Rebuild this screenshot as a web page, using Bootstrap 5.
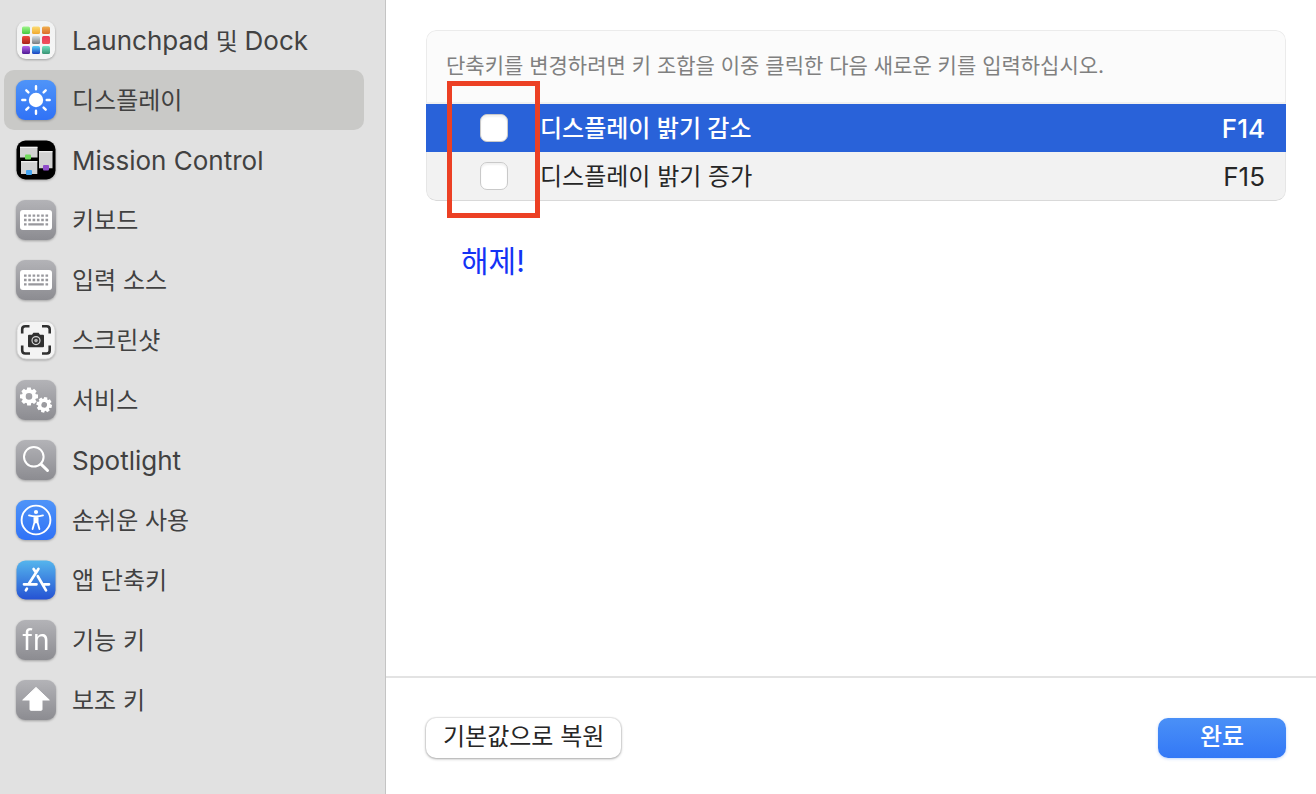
<!DOCTYPE html>
<html lang="ko">
<head>
<meta charset="utf-8">
<meta name="viewport" content="width=device-width, initial-scale=1">
<title>키보드 단축키</title>
<link href="https://cdn.jsdelivr.net/npm/bootstrap@5.3.0/dist/css/bootstrap.min.css" rel="stylesheet">
<style>
body { font-family: Inter, "Noto Sans CJK KR", sans-serif; font-size: 24px; line-height: 32px; color: #262626; background: #fff; }
.side { flex: 0 0 386px; padding: 10px 21px 10px 4px; background: #e1e1e1; border-right: 1px solid #c4c4c4; }
.side .nav-link { height: 60px; padding: 0 12px; gap: 16px; border-radius: 10px; color: #414141; }
.side .nav-link.active { background: #c9c9c7; color: #414141; }
.side .nav-link > span { padding-top: 2px; }
.latin { font-size: 26px; }
.side svg { width: 40px; height: 40px; flex: none; overflow: visible; filter: drop-shadow(0 1px 1px rgba(0,0,0,.28)); }
.content-area { padding: 30px 30px 30px 40px; }
.panel { border-radius: 10px; overflow: hidden; }
.hint { height: 74px; padding: 0 19px 2px; font-size: 21px; color: #808080; background: #fbfbfb; border: 1px solid #ebebeb; border-bottom: 2px solid #f0f0f0; border-radius: 10px 10px 0 0; }
.keys { width: 100%; border-collapse: separate; border-spacing: 0; }
.keys td { height: 48px; padding: 2px 0 0; background: #f2f2f2; }
.keys .chosen td { background: #2962d9; color: #fff; font-weight: 500; }
.keys .tick-cell { width: 114px; padding-top: 0; padding-left: 54px; }
.keys .key-cell { padding-right: 21px; text-align: right; }
.keys tr:last-child td { height: 49px; border-bottom: 1px solid #d9d9d9; }
.keys tr:last-child td:first-child { border-left: 1px solid #e6e6e6; border-bottom-left-radius: 10px; padding-left: 53px; }
.keys tr:last-child td:last-child { border-right: 1px solid #e6e6e6; border-bottom-right-radius: 10px; padding-right: 20px; }
.keys .form-check-input { display: block; float: none; width: 28px; height: 28px; margin: 0; border: 1px solid #c9c9c9; border-radius: 7px; box-shadow: inset 0 2px 2px rgba(0,0,0,.06); background-color: #fff; }
.marker { left: 21px; top: 51px; width: 93px; height: 137px; border: 5px solid #ec4024; pointer-events: none; }
.note { margin: 44px 0 0 35px; font-size: 30px; color: #1433f5; }
.foot { height: 118px; padding: 4px 30px 0 40px; border-top: 2px solid #e3e3e3; }
.foot .btn { height: 40px; padding: 0 17px 3px; font-size: 24px; line-height: 32px; border: 0; border-radius: 10px; }
.btn-plain, .btn-plain:hover { color: #262626; background: #fff; box-shadow: 0 0 1px 1px rgba(0,0,0,.08), 0 1px 3px rgba(0,0,0,.3); }
.btn-done, .btn-done:hover { width: 128px; color: #fff; font-weight: 500; background: linear-gradient(#4a90f7, #3378f6); box-shadow: 0 1px 3px rgba(51,120,246,.3); }
</style>
</head>
<body>
<svg width="0" height="0" class="position-absolute" aria-hidden="true">
  <defs>
    <linearGradient id="gray" x2="0" y2="1"><stop stop-color="#b3b3b7"/><stop offset="1" stop-color="#8c8c91"/></linearGradient>
    <linearGradient id="blue" x2="0" y2="1"><stop stop-color="#4f94f8"/><stop offset="1" stop-color="#3072f6"/></linearGradient>
    <linearGradient id="store" x2="0" y2="1"><stop stop-color="#55b5ed"/><stop offset="1" stop-color="#2552d3"/></linearGradient>
    <linearGradient id="paper" x2="0" y2="1"><stop stop-color="#f1f2f2"/><stop offset="1" stop-color="#f6f6f6"/></linearGradient>
    <linearGradient id="c1" x2="0" y2="1"><stop stop-color="#a0f58c"/><stop offset="1" stop-color="#43c83c"/></linearGradient>
    <linearGradient id="c2" x2="0" y2="1"><stop stop-color="#fbdc74"/><stop offset="1" stop-color="#f0a92e"/></linearGradient>
    <linearGradient id="c3" x2="0" y2="1"><stop stop-color="#f0b04e"/><stop offset="1" stop-color="#db6a2b"/></linearGradient>
    <linearGradient id="c4" x2="0" y2="1"><stop stop-color="#ef4b3e"/><stop offset="1" stop-color="#a82119"/></linearGradient>
    <linearGradient id="c5" x2="0" y2="1"><stop stop-color="#d5dfe4"/><stop offset="1" stop-color="#777c7f"/></linearGradient>
    <linearGradient id="c6" x2="0" y2="1"><stop stop-color="#e93a58"/><stop offset="1" stop-color="#f0525c"/></linearGradient>
    <linearGradient id="c7" x2="0" y2="1"><stop stop-color="#b763ec"/><stop offset="1" stop-color="#4e1a94"/></linearGradient>
    <linearGradient id="c8" x2="0" y2="1"><stop stop-color="#55d3fa"/><stop offset="1" stop-color="#1e41c0"/></linearGradient>
    <linearGradient id="c9" x2="0" y2="1"><stop stop-color="#72e3c2"/><stop offset="1" stop-color="#3a9474"/></linearGradient>
    <g id="keyboard">
      <rect width="40" height="40" rx="9" fill="url(#gray)"/>
      <rect x="4" y="10" width="32" height="20" rx="3" fill="#fff"/>
      <g stroke="#98989d" stroke-width="2.4"><path d="M8 15.6h25M8 20h25" stroke-dasharray="2.6 1.7"/><path d="M8 24.4h2.6M12.3 24.4h15.500M29.500 24.4h2.6"/></g>
    </g>
    <path id="tooth" d="M-1.8 -9h3.6l.7 4h-5z"/>
    <g id="cog">
      <circle r="5.2" fill="none" stroke="#fff" stroke-width="3.8"/>
      <g fill="#fff"><use href="#tooth"/><use href="#tooth" transform="rotate(45)"/><use href="#tooth" transform="rotate(90)"/><use href="#tooth" transform="rotate(135)"/><use href="#tooth" transform="rotate(180)"/><use href="#tooth" transform="rotate(225)"/><use href="#tooth" transform="rotate(270)"/><use href="#tooth" transform="rotate(315)"/></g>
    </g>
  </defs>
</svg>
<div class="d-flex min-vh-100">
  <nav class="side nav flex-column flex-nowrap" aria-label="단축키 분류">
    <a class="nav-link d-flex align-items-center" href="#">
      <svg viewBox="0 0 40 40"><rect x="1" y="1" width="38" height="38" rx="9" fill="url(#paper)"/>
        <g><rect x="6" y="6.500" width="8" height="7.500" rx="1.5" fill="url(#c1)"/><rect x="16" y="6.500" width="8" height="7.500" rx="1.5" fill="url(#c2)"/><rect x="26" y="6.500" width="8" height="7.500" rx="1.5" fill="url(#c3)"/><rect x="6" y="16" width="8" height="8" rx="1.5" fill="url(#c4)"/><rect x="16" y="16" width="8" height="8" rx="1.5" fill="url(#c5)"/><rect x="26" y="16" width="8" height="8" rx="1.5" fill="url(#c6)"/><rect x="6" y="26" width="8" height="8" rx="1.5" fill="url(#c7)"/><rect x="16" y="26" width="8" height="8" rx="1.5" fill="url(#c8)"/><rect x="26" y="26" width="8" height="8" rx="1.5" fill="url(#c9)"/></g></svg>
      <span><span class="latin">Launchpad</span> 및 <span class="latin">Dock</span></span></a>
    <a class="nav-link active d-flex align-items-center" href="#" aria-current="page">
      <svg viewBox="0 0 40 40"><rect width="40" height="40" rx="9" fill="url(#blue)"/><circle cx="20" cy="20" r="7.2" fill="#fff"/>
        <path d="M20 6.300v3M20 30.700v3M6.300 20h3M30.700 20h3M10.300 10.300l2.1 2.1M27.600 27.600l2.1 2.1M10.300 29.700l2.1-2.1M27.600 12.400l2.1-2.1" stroke="#fff" stroke-width="2.4" stroke-linecap="round"/></svg>
      <span>디스플레이</span></a>
    <a class="nav-link d-flex align-items-center" href="#">
      <svg viewBox="0 0 40 40"><rect x=".5" y=".5" width="39" height="39" rx="9" fill="#000"/>
        <g fill="#d2d2d2"><path d="M4 7h17.500v10.500H4zM5 21.300h16.300v12.700H5zM23 11.300h13.500v17H23z"/></g>
        <path d="M4 7.200h17.500M5 21.700h16.300M23 11.700h13.500" stroke="#fff"/>
        <rect x="9" y="14.5" width="6" height="5" rx="1" fill="#70d85b"/><rect x="10" y="30" width="6" height="5" rx="1" fill="#43a4f2"/><rect x="27" y="25" width="6" height="5.5" rx="1" fill="#8f4cc9"/></svg>
      <span class="latin">Mission Control</span></a>
    <a class="nav-link d-flex align-items-center" href="#"><svg viewBox="0 0 40 40"><use href="#keyboard"/></svg><span>키보드</span></a>
    <a class="nav-link d-flex align-items-center" href="#"><svg viewBox="0 0 40 40"><use href="#keyboard"/></svg><span>입력 소스</span></a>
    <a class="nav-link d-flex align-items-center" href="#">
      <svg viewBox="0 0 40 40"><rect x="1" y="1.5" width="38" height="37.5" rx="9" fill="#f4f4f4" stroke="#d5d5d5" stroke-width=".8"/>
        <path d="M6.200 13.500V9.200q0-3 3-3h4.300M26 6.200h4.700q3 0 3 3v4.300M33.700 25.500v5q0 3-3 3H26M14 33.500H9.200q-3 0-3-3v-5" fill="none" stroke="#303030" stroke-width="2.6"/>
        <path d="M13 14.8h3l1.4-2h5.2l1.4 2h3q1 0 1 1v10.4q0 1-1 1H13q-1 0-1-1V15.8q0-1 1-1z" fill="#303030"/><circle cx="20" cy="20.6" r="4" fill="none" stroke="#d6d6d6" stroke-width="1.2"/><circle cx="20" cy="20.6" r="1.8" fill="#b4b4b4"/></svg>
      <span>스크린샷</span></a>
    <a class="nav-link d-flex align-items-center" href="#">
      <svg viewBox="0 0 40 40"><rect width="40" height="40" rx="9" fill="url(#gray)"/><use href="#cog" transform="translate(13 16.4)"/><use href="#cog" transform="translate(28.2 24.8) rotate(12) scale(.86)"/></svg>
      <span>서비스</span></a>
    <a class="nav-link d-flex align-items-center" href="#">
      <svg viewBox="0 0 40 40"><rect width="40" height="40" rx="9" fill="url(#gray)"/><circle cx="17.8" cy="16.800" r="9.800" fill="none" stroke="#fff" stroke-width="2"/><path d="M25 24.2l6.500 6.3" stroke="#fff" stroke-width="3" stroke-linecap="round"/></svg>
      <span class="latin">Spotlight</span></a>
    <a class="nav-link d-flex align-items-center" href="#">
      <svg viewBox="0 0 40 40"><rect width="40" height="40" rx="9" fill="url(#blue)"/><circle cx="20" cy="20" r="14.4" fill="none" stroke="#fff" stroke-width="1.9"/><circle cx="20" cy="12" r="2.1" fill="#fff"/>
        <path d="M13 15.4q7 1.8 14 0M20 17v5.5M18.4 17v5.6l-1.800 6.5M21.6 17v5.6l1.800 6.5" fill="none" stroke="#fff" stroke-width="1.8" stroke-linecap="round" stroke-linejoin="round"/></svg>
      <span>손쉬운 사용</span></a>
    <a class="nav-link d-flex align-items-center" href="#">
      <svg viewBox="0 0 40 40"><rect x=".5" y=".5" width="39" height="39" rx="9" fill="url(#store)"/>
        <g stroke="#fff" stroke-width="2.7" stroke-linecap="round"><path d="M22.4 9L13 23.5M10.9 28.6l-1 1.8M17.6 9l2 3M21.8 16.2l8.2 14.2M8 24.3h12.5M28.5 24.3H33"/></g></svg>
      <span>앱 단축키</span></a>
    <a class="nav-link d-flex align-items-center" href="#">
      <svg viewBox="0 0 40 40"><rect width="40" height="40" rx="9" fill="url(#gray)"/><text x="20" y="30" text-anchor="middle" font-size="28" font-weight="400" fill="#fff">fn</text></svg>
      <span>기능 키</span></a>
    <a class="nav-link d-flex align-items-center" href="#">
      <svg viewBox="0 0 40 40"><rect width="40" height="40" rx="9" fill="url(#gray)"/><path d="M20 7.4L33.3 20H26v9.5q0 .8-.8.8H14.8q-.8 0-.8-.8V20H6.700z" fill="#fff" stroke="#fff" stroke-linejoin="round"/></svg>
      <span>보조 키</span></a>
  </nav>
  <main class="d-flex flex-column flex-grow-1">
    <section class="content-area flex-grow-1">
      <div class="position-relative">
        <div class="panel">
          <div class="hint d-flex align-items-center">단축키를 변경하려면 키 조합을 이중 클릭한 다음 새로운 키를 입력하십시오.</div>
          <table class="keys">
            <tbody>
              <tr class="chosen"><td class="tick-cell"><input class="form-check-input" type="checkbox" id="dim"></td><td><label for="dim">디스플레이 밝기 감소</label></td><td class="key-cell latin">F14</td></tr>
              <tr><td class="tick-cell"><input class="form-check-input" type="checkbox" id="bright"></td><td><label for="bright">디스플레이 밝기 증가</label></td><td class="key-cell latin">F15</td></tr>
            </tbody>
          </table>
        </div>
        <div class="marker position-absolute"></div>
      </div>
      <p class="note">해제!</p>
    </section>
    <footer class="foot d-flex align-items-center justify-content-between">
      <button class="btn btn-plain" type="button">기본값으로 복원</button>
      <button class="btn btn-done" type="button">완료</button>
    </footer>
  </main>
</div>
<script src="https://cdn.jsdelivr.net/npm/bootstrap@5.3.0/dist/js/bootstrap.bundle.min.js"></script>
</body>
</html>
